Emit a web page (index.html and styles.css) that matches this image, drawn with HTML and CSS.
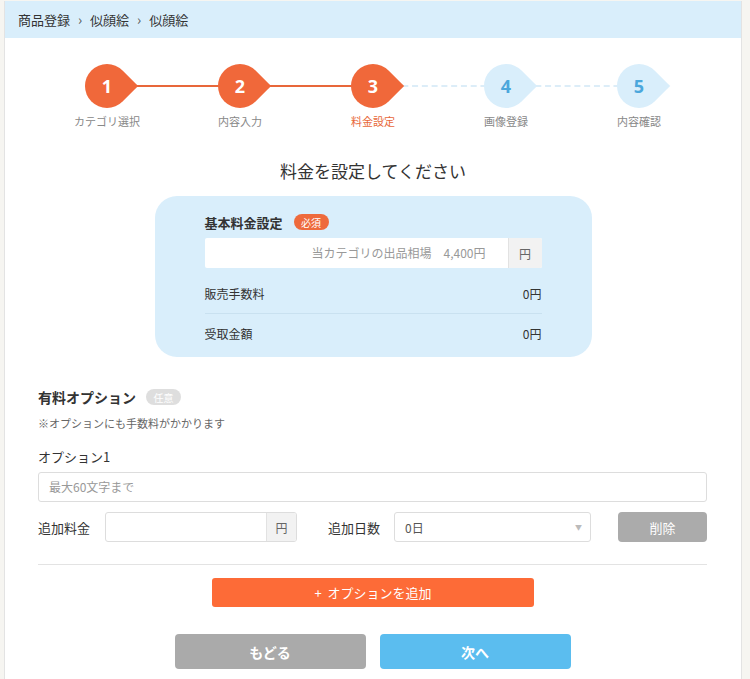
FILE: index.html
```html
<!DOCTYPE html>
<html lang="ja">
<head>
<meta charset="utf-8">
<link rel="stylesheet" href="styles.css">
</head>
<body>
<div class="page">
  <div class="crumbs">商品登録 <span class="sep">›</span> 似顔絵 <span class="sep">›</span> 似顔絵</div>

  <ol class="steps">
    <li class="step done line-on"><span class="drop"><b>1</b></span><span class="lbl">カテゴリ選択</span></li>
    <li class="step done line-on"><span class="drop"><b>2</b></span><span class="lbl">内容入力</span></li>
    <li class="step done current line-off"><span class="drop"><b>3</b></span><span class="lbl">料金設定</span></li>
    <li class="step todo line-off"><span class="drop"><b>4</b></span><span class="lbl">画像登録</span></li>
    <li class="step todo last"><span class="drop"><b>5</b></span><span class="lbl">内容確認</span></li>
  </ol>

  <h1 class="title">料金を設定してください</h1>

  <div class="card">
    <div class="card-head">基本料金設定<span class="badge req">必須</span></div>
    <div class="price-input">
      <span class="ph">当カテゴリの出品相場　4,400円</span>
      <span class="addon">円</span>
    </div>
    <div class="row bordered"><span>販売手数料</span><span>0円</span></div>
    <div class="row"><span>受取金額</span><span>0円</span></div>
  </div>

  <section class="options">
    <div class="opt-head">有料オプション<span class="badge opt">任意</span></div>
    <p class="note">※オプションにも手数料がかかります</p>
    <div class="opt-label">オプション1</div>
    <div class="text-input">最大60文字まで</div>
    <div class="opt-row">
      <span class="f-label">追加料金</span>
      <div class="fee-input"><span class="fee-field"></span><span class="addon">円</span></div>
      <span class="f-label days">追加日数</span>
      <div class="select"><span>0日</span><span class="arrow">▼</span></div>
      <button class="del">削除</button>
    </div>
    <hr class="divider">
    <div class="add-wrap"><button class="add">+&nbsp; オプションを追加</button></div>
    <div class="nav">
      <button class="back">もどる</button>
      <button class="next">次へ</button>
    </div>
  </section>
</div>
</body>
</html>
```

FILE: styles.css
```css
* { box-sizing: border-box; }
html, body { margin: 0; padding: 0; }
body {
  background: #f6f5f1;
  font-family: "Noto Sans CJK JP", "Noto Sans", sans-serif;
  color: #333;
}
.page {
  margin: 1px 0 0 4px;
  width: 738px;
  min-height: 678px;
  background: #fff;
  border-left: 1px solid #e3e3e3;
  border-right: 1px solid #e3e3e3;
}
.crumbs {
  height: 37px;
  line-height: 37px;
  background: #d9eefb;
  padding-left: 13px;
  font-size: 13px;
  color: #333;
}
.crumbs .sep { margin: 0 5px; font-size: 14px; color: #555; }

.steps {
  list-style: none;
  margin: 26px auto 0;
  padding: 0;
  width: 665px;
  display: flex;
}
.step {
  width: 133px;
  display: flex;
  flex-direction: column;
  align-items: center;
  position: relative;
}
.step::after {
  content: "";
  position: absolute;
  top: 21px;
  left: 50%;
  width: 100%;
  height: 2px;
  z-index: 0;
}
.step.line-on::after { background: #e8673a; }
.step.line-off::after { border-top: 2px dashed #dcedf8; top: 21px; height: 0; }
.step.last::after { display: none; }
.drop {
  width: 44px;
  height: 44px;
  position: relative;
  z-index: 1;
  display: flex;
  align-items: center;
  justify-content: center;
}
.drop::before {
  content: "";
  position: absolute;
  inset: 0;
  border-radius: 50% 0 50% 50%;
  transform: rotate(45deg);
}
.drop b {
  position: relative;
  font-family: "Open Sans", "Noto Sans", sans-serif;
  font-size: 18px;
  font-weight: 700;
}
.done .drop::before { background: #f0683a; }
.done .drop b { color: #fff; }
.todo .drop::before { background: #d9eefb; }
.todo .drop b { color: #4ba7dc; }
.lbl {
  margin-top: 6px;
  font-size: 11px;
  line-height: 14px;
  color: #888;
}
.current .lbl { color: #e8673a; }

.title {
  margin: 31px 0 0;
  text-align: center;
  font-size: 17px;
  line-height: 24px;
  font-weight: 400;
  color: #333;
}

.card {
  width: 437px;
  margin: 13px auto 0;
  background: #d9eefb;
  border-radius: 22px;
  padding: 16px 50px 5px;
}
.card-head {
  height: 20px;
  display: flex;
  align-items: center;
  font-size: 13px;
  font-weight: 700;
  color: #333;
}
.badge {
  display: inline-flex;
  align-items: center;
  justify-content: center;
  width: 35px;
  height: 16px;
  border-radius: 8px;
  color: #fff;
  font-size: 10px;
  font-weight: 400;
  margin-left: 11px;
}
.badge.req { background: #ee6a3c; }
.badge.opt { background: #dedede; margin-left: 10px; }
.price-input {
  margin-top: 6px;
  height: 30px;
  display: flex;
  background: #fff;
  border-radius: 2px;
  overflow: hidden;
}
.price-input .ph {
  flex: 1;
  text-align: right;
  padding-right: 22px;
  line-height: 30px;
  font-size: 12px;
  color: #999;
}
.addon {
  width: 34px;
  background: #f2f2f2;
  border-left: 1px solid #e2e2e2;
  display: flex;
  align-items: center;
  justify-content: center;
  font-size: 12px;
  color: #666;
}
.row {
  display: flex;
  justify-content: space-between;
  align-items: center;
  font-size: 12px;
  color: #333;
  height: 38px;
}
.row.bordered {
  margin-top: 6px;
  height: 40px;
  border-bottom: 1px solid #c9e1f0;
}

.options { padding: 0 34px 0 33px; }
.opt-head {
  margin-top: 30px;
  height: 20px;
  display: flex;
  align-items: center;
  font-size: 14px;
  font-weight: 700;
  color: #333;
}
.note {
  margin: 8px 0 0;
  font-size: 11px;
  line-height: 16px;
  color: #666;
}
.opt-label {
  margin-top: 17px;
  font-size: 13px;
  line-height: 18px;
  color: #333;
}
.text-input {
  margin-top: 6px;
  height: 30px;
  border: 1px solid #ddd;
  border-radius: 3px;
  padding-left: 10px;
  line-height: 28px;
  font-size: 12px;
  color: #999;
}
.opt-row {
  margin-top: 10px;
  height: 30px;
  display: flex;
  align-items: center;
}
.f-label { font-size: 13px; color: #333; width: 67px; }
.f-label.days { margin-left: 31px; width: 66px; }
.fee-input {
  width: 192px;
  height: 30px;
  display: flex;
  border: 1px solid #ddd;
  border-radius: 3px;
  overflow: hidden;
}
.fee-field { flex: 1; }
.fee-input .addon { width: 30px; background: #f2f2f2; }
.select {
  width: 197px;
  height: 30px;
  border: 1px solid #ddd;
  border-radius: 3px;
  display: flex;
  align-items: center;
  justify-content: space-between;
  padding: 0 8px 0 10px;
  font-size: 12px;
  color: #555;
}
.select .arrow { font-size: 7px; color: #bbb; }
button {
  font-family: inherit;
  border: 0;
  color: #fff;
  cursor: pointer;
}
.del {
  margin-left: auto;
  width: 89px;
  height: 30px;
  border-radius: 4px;
  background: #ababab;
  font-size: 13px;
}
.divider {
  margin: 22px 0 0;
  border: 0;
  border-top: 1px solid #e3e3e3;
}
.add-wrap { display: flex; justify-content: center; margin-top: 13px; padding-left: 1px; }
.add {
  width: 322px;
  height: 29px;
  background: #fd6b37;
  border-radius: 3px;
  font-size: 13px;
}
.nav {
  margin-top: 27px;
  display: flex;
  justify-content: center;
  gap: 14px;
}
.nav button {
  width: 191px;
  height: 35px;
  border-radius: 4px;
  font-size: 14px;
  font-weight: 700;
}
.back { background: #aaa; }
.next { background: #5bbdef; }
```
